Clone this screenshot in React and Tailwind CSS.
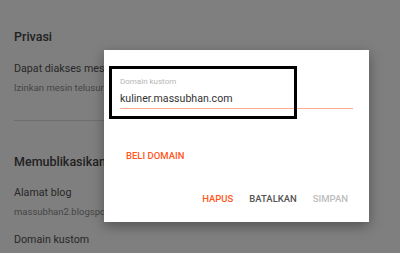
import React from 'react';

const SettingsPage = () => {
  return (
    <div className="px-[14px] pt-[29px] bg-white h-[253px] overflow-hidden">
      <div className="text-[12.5px] leading-[16px] font-medium text-[#444]">Privasi</div>
      <div className="mt-[17px] text-[10.7px] leading-[14px] text-[#505050]">Dapat diakses mesin telusur</div>
      <div className="mt-[6px] text-[9.5px] leading-[12px] text-[#8c8c8c]">Izinkan mesin telusur menemukan blog Anda</div>
      <div className="mt-[26px] h-px w-[340px] bg-[#dcdcdc]" />
      <div className="mt-[33px] text-[12.5px] leading-[16px] font-medium text-[#444]">Memublikasikan</div>
      <div className="mt-[16px] text-[10.7px] leading-[14px] text-[#505050]">Alamat blog</div>
      <div className="mt-[6px] text-[9.5px] leading-[12px] text-[#8c8c8c]">massubhan2.blogspot.com</div>
      <div className="mt-[15px] text-[10.7px] leading-[14px] text-[#505050]">Domain kustom</div>
    </div>
  );
};

const DomainDialog = () => {
  return (
    <div className="absolute left-[104px] top-[50px] w-[265px] h-[172px] bg-white shadow-[0_4px_12px_rgba(0,0,0,0.35)] px-4 pt-[27px]">
      <div className="text-[8px] leading-[10px] text-[#b5b5b5]">Domain kustom</div>
      <div className="mt-[5px] pb-[2px] border-b border-[#ffab91] text-[10.6px] leading-[14px] text-[#333]">
        kuliner.massubhan.com
      </div>

      <button className="block mt-[41px] pl-[6px] text-[9.5px] leading-[12px] font-medium text-[#ff5722]">
        BELI DOMAIN
      </button>

      <div className="mt-[31px] pr-[5px] flex justify-end gap-[16px] text-[9.5px] leading-[12px] font-medium">
        <button className="text-[#ff5722]">HAPUS</button>
        <button className="text-[#555]">BATALKAN</button>
        <button className="text-[#bdbdbd]">SIMPAN</button>
      </div>

      {/* highlight box drawn over the field */}
      <div className="absolute left-[5px] top-[16px] w-[188px] h-[53px] border-[3px] border-black pointer-events-none" />
    </div>
  );
};

const App = () => {
  return (
    <div className="relative w-[400px] h-[253px] overflow-hidden font-['Roboto',sans-serif]">
      <SettingsPage />
      <div className="absolute inset-0 bg-black/50" />
      <DomainDialog />
    </div>
  );
};

export default App;
